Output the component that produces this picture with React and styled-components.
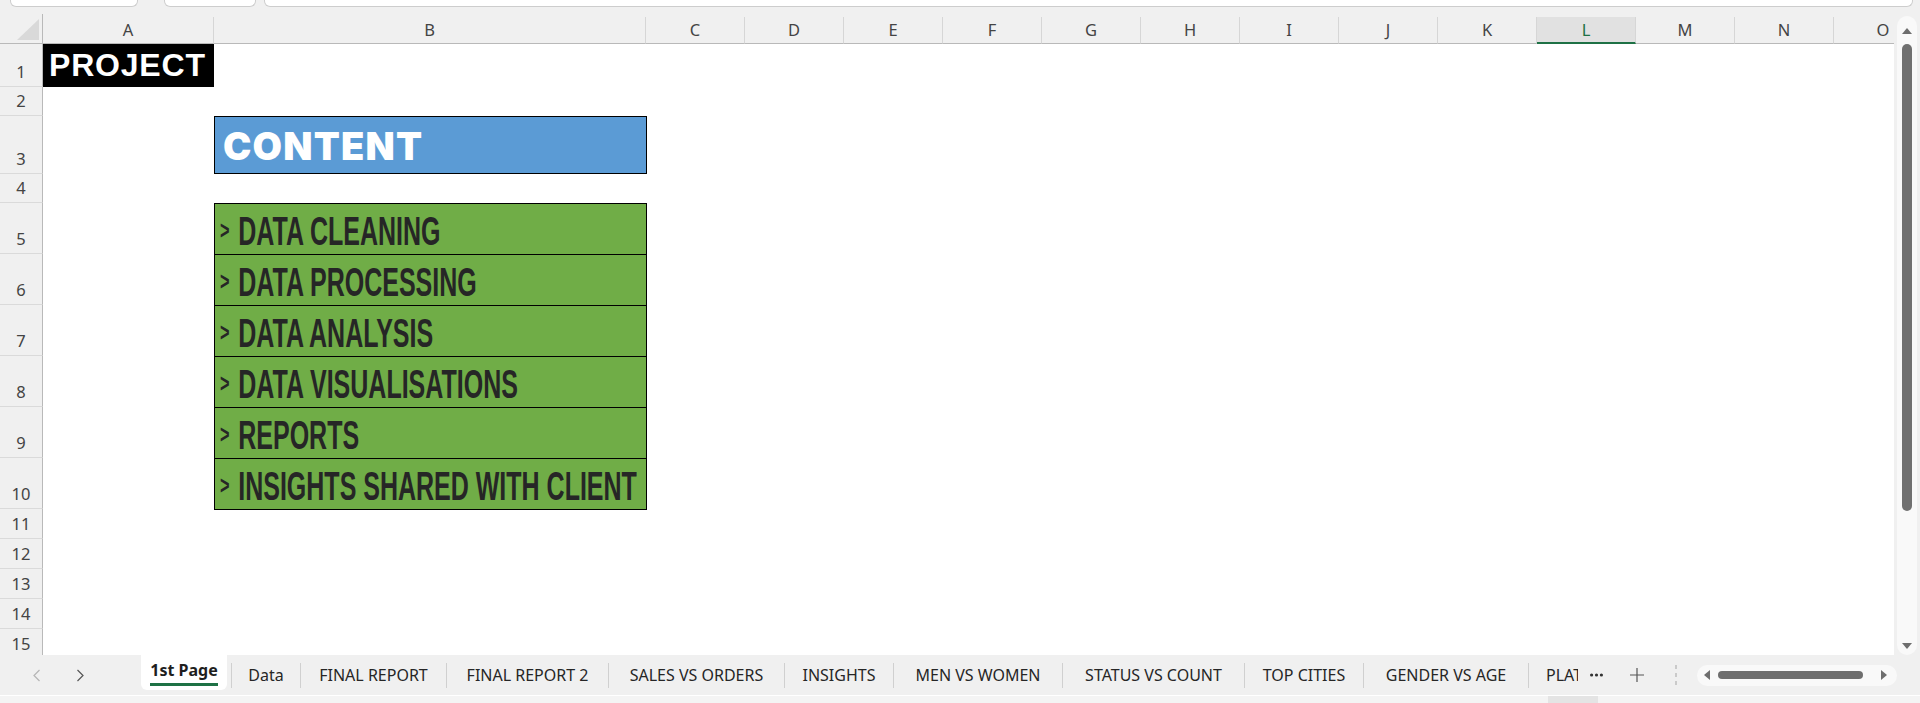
import React from 'react';
import styled, { createGlobalStyle } from "styled-components";

const GlobalStyle = createGlobalStyle`
    html, body {
        margin: 0;
        padding: 0;
        background: #f0f0f0;
        overflow: hidden;
    }
`;

const ui = `"Noto Sans", "Open Sans", "DejaVu Sans", sans-serif`;
const gridCols = `43px 171px 432px repeat(13, 99px)`;
const rowHeights = [43, 29, 58, 29, 51, 51, 51, 51, 51, 51, 30, 30, 30, 30, 30];
const columns = ['A', 'B', 'C', 'D', 'E', 'F', 'G', 'H', 'I', 'J', 'K', 'L', 'M', 'N', 'O'];

const Window = styled.div`
    width: 1920px;
    height: 703px;
    display: flex;
    flex-direction: column;
    background: #f0f0f0;
    overflow: hidden;
    font-family: ${ui};
`;

const TopStrip = styled.div`
    height: 14px;
    flex: none;
    display: flex;
    align-items: flex-start;
    padding-left: 10px;
`;

const InputStub = styled.div`
    width: ${p => p.$w}px;
    margin-right: ${p => p.$gap || 0}px;
    height: 6px;
    background: #fff;
    border: 1px solid #cdcdcd;
    border-top: none;
    border-radius: 0 0 6px 6px;
`;

const Main = styled.div`
    flex: 1;
    display: flex;
    min-height: 0;
`;

const Sheet = styled.div`
    width: 1894px;
    flex: none;
    display: flex;
    flex-direction: column;
    background: #fff;
    overflow: hidden;
`;

const HeaderRow = styled.div`
    height: 30px;
    flex: none;
    display: grid;
    grid-template-columns: ${gridCols};
    background: #f0f0f0;
`;

const Corner = styled.div`
    display: flex;
    align-items: flex-end;
    justify-content: flex-end;
    padding: 0 3px 3px 0;
    border-right: 1px solid #b9b9b9;
    border-bottom: 1px solid #b9b9b9;
`;

const ColHead = styled.div`
    display: flex;
    align-items: flex-end;
    justify-content: center;
    padding-bottom: ${p => p.$selected ? 4 : 5}px;
    margin-top: 3px;
    font-size: 16.5px;
    line-height: 1;
    color: ${p => p.$selected ? '#1e7145' : '#444'};
    background: ${p => p.$selected ? '#e1e1e1' : 'transparent'};
    border-right: 1px solid #d6d6d6;
    border-bottom: ${p => p.$selected ? '2px solid #1e7145' : '1px solid #b9b9b9'};
`;

const Body = styled.div`
    flex: 1;
    display: grid;
    grid-template-columns: ${gridCols};
    grid-template-rows: ${rowHeights.map(h => h + 'px').join(' ')};
    overflow: hidden;
`;

const RowHead = styled.div`
    grid-column: 1;
    grid-row: ${p => p.$row};
    display: flex;
    align-items: flex-end;
    justify-content: center;
    padding-bottom: 6px;
    box-sizing: border-box;
    background: #f0f0f0;
    border-right: 1px solid #b9b9b9;
    border-bottom: 1px solid #dadada;
    font-size: 16.5px;
    line-height: 1;
    color: #444;
`;

const ProjectCell = styled.div`
    grid-column: 2;
    grid-row: 1;
    display: flex;
    align-items: center;
    padding-left: 6px;
    background: #000;
    color: #fff;
    font-family: "Liberation Sans", Arial, sans-serif;
    font-weight: bold;
    font-size: 32px;
    letter-spacing: 0.8px;
`;

const ContentCell = styled.div`
    grid-column: 3;
    grid-row: 3;
    margin-right: -1px;
    display: flex;
    align-items: center;
    padding: 2px 0 0 8px;
    background: #5b9bd5;
    border: 1px solid #000;
    color: #fff;
    font-family: Inter, "Liberation Sans", sans-serif;
    font-weight: 900;
    font-size: 38px;
    letter-spacing: 1.2px;
`;

const ItemCell = styled.div`
    grid-column: 3;
    grid-row: ${p => p.$row};
    margin-right: -1px;
    margin-bottom: ${p => p.$last ? -1 : 0}px;
    display: flex;
    align-items: center;
    padding: 4px 0 0 5px;
    background: #70ad47;
    border: 1px solid #000;
    border-bottom: ${p => p.$last ? '1px solid #000' : 'none'};
    overflow: hidden;
`;

const ItemText = styled.span`
    display: inline-block;
    transform: scaleX(0.625);
    transform-origin: left center;
    white-space: nowrap;
    font-family: "Liberation Sans", Arial, sans-serif;
    font-weight: bold;
    font-size: 40px;
    line-height: 1;
    color: #262626;
`;

const Chevron = styled.span`
    display: inline-block;
    font-size: 26px;
    vertical-align: 6px;
    margin-right: 14px;
`;

const VScroll = styled.div`
    width: 26px;
    flex: none;
    display: flex;
    padding: 2px 3px 0 3px;
    box-sizing: border-box;
`;

const VTrack = styled.div`
    flex: 1;
    display: flex;
    flex-direction: column;
    align-items: center;
    border-radius: 10px;
    background: #f9f9f9;
`;

const VThumb = styled.div`
    width: 10px;
    height: 467px;
    margin-top: 10px;
    border-radius: 5px;
    background: #707070;
`;

const Spacer = styled.div`
    flex: 1;
`;

const TabBar = styled.div`
    height: 40px;
    flex: none;
    display: flex;
    align-items: center;
    background: #f0f0f0;
    font-size: 16px;
    color: #262626;
`;

const NavArea = styled.div`
    width: 141px;
    flex: none;
    display: flex;
    align-items: center;
    padding-left: 33px;
    gap: 35px;
    box-sizing: border-box;
`;

const ActiveTab = styled.div`
    width: 86px;
    height: 35px;
    align-self: flex-start;
    margin-right: 4px;
    display: flex;
    align-items: center;
    justify-content: center;
    background: #fff;
    border-radius: 0 0 6px 6px;
    box-sizing: border-box;
    padding-top: 2px;

    span {
        font-weight: bold;
        color: #1e1e1e;
        border-bottom: 3px solid #1e7145;
        line-height: 1.2;
        padding-bottom: 2px;
    }
`;

const Sep = styled.div`
    width: 1px;
    height: 25px;
    flex: none;
    background: #d0d0d0;
`;

const Tab = styled.div`
    width: ${p => p.$w}px;
    flex: none;
    display: flex;
    justify-content: ${p => p.$cut ? 'flex-start' : 'center'};
    padding-left: ${p => p.$cut ? 17 : 0}px;
    box-sizing: border-box;
    white-space: nowrap;
    overflow: hidden;
`;

const IconSlot = styled.div`
    width: ${p => p.$w}px;
    flex: none;
    display: flex;
    align-items: center;
    justify-content: center;
`;

const HScroll = styled.div`
    width: 200px;
    height: 21px;
    margin-left: 4px;
    flex: none;
    display: flex;
    align-items: center;
    padding: 0 10px 0 7px;
    box-sizing: border-box;
    border-radius: 11px;
    background: #f9f9f9;
`;

const HThumb = styled.div`
    width: 145px;
    height: 8px;
    margin-left: 8px;
    border-radius: 4px;
    background: #6e6e6e;
`;

const StatusStrip = styled.div`
    height: 7px;
    flex: none;
    display: flex;
    background: #f4f4f4;
    border-top: 1px solid #fff;
    padding-left: 1548px;
`;

const ViewButton = styled.div`
    width: 50px;
    background: #e4e4e4;
`;

const Tri = ({ dir, color = '#6e6e6e' }) => {
    const pts = {
        up: '0,6 5,0 10,6',
        down: '0,0 10,0 5,6',
        left: '6,0 6,10 0,5',
        right: '0,0 6,5 0,10',
    }[dir];
    const vertical = dir === 'up' || dir === 'down';
    return (
        <svg width={vertical ? 10 : 6} height={vertical ? 6 : 10}>
            <polygon points={pts} fill={color} />
        </svg>
    );
};

const Chev = ({ left, color }) => (
    <svg width="8" height="13" viewBox="0 0 8 13">
        <polyline points={left ? '6.5,1 1,6.5 6.5,12' : '1.5,1 7,6.5 1.5,12'} fill="none" stroke={color} strokeWidth="1.2" />
    </svg>
);

const items = [
    'DATA CLEANING',
    'DATA PROCESSING',
    'DATA ANALYSIS',
    'DATA VISUALISATIONS',
    'REPORTS',
    'INSIGHTS SHARED WITH CLIENT',
];

const tabs = [
    ['Data', 68],
    ['FINAL REPORT', 145],
    ['FINAL REPORT 2', 161],
    ['SALES VS ORDERS', 175],
    ['INSIGHTS', 108],
    ['MEN VS WOMEN', 168],
    ['STATUS VS COUNT', 181],
    ['TOP CITIES', 118],
    ['GENDER VS AGE', 164],
];

const App = () => {
    return (
        <Window>
            <GlobalStyle />
            <TopStrip>
                <InputStub $w={126} $gap={26} />
                <InputStub $w={90} $gap={8} />
                <InputStub $w={1647} />
            </TopStrip>
            <Main>
                <Sheet>
                    <HeaderRow>
                        <Corner>
                            <svg width="22" height="21">
                                <polygon points="22,0 22,21 0,21" fill="#d9d9d9" />
                            </svg>
                        </Corner>
                        {columns.map(c => (
                            <ColHead key={c} $selected={c === 'L'}>{c}</ColHead>
                        ))}
                    </HeaderRow>
                    <Body>
                        {rowHeights.map((h, i) => (
                            <RowHead key={i} $row={i + 1}>{i + 1}</RowHead>
                        ))}
                        <ProjectCell>PROJECT</ProjectCell>
                        <ContentCell>CONTENT</ContentCell>
                        {items.map((item, i) => (
                            <ItemCell key={item} $row={i + 5} $last={i === items.length - 1}>
                                <ItemText><Chevron>&gt;</Chevron>{item}</ItemText>
                            </ItemCell>
                        ))}
                    </Body>
                </Sheet>
                <VScroll>
                    <VTrack>
                        <div style={{ marginTop: 12, lineHeight: 0 }}><Tri dir="up" /></div>
                        <VThumb />
                        <Spacer />
                        <div style={{ marginBottom: 6, lineHeight: 0 }}><Tri dir="down" /></div>
                    </VTrack>
                </VScroll>
            </Main>
            <TabBar>
                <NavArea>
                    <Chev left color="#b5b5b5" />
                    <Chev color="#555" />
                </NavArea>
                <ActiveTab><span>1st Page</span></ActiveTab>
                {tabs.map(([name, w]) => (
                    <React.Fragment key={name}>
                        <Sep />
                        <Tab $w={w}>{name}</Tab>
                    </React.Fragment>
                ))}
                <Sep />
                <Tab $w={49} $cut>PLATFORM</Tab>
                <IconSlot $w={37}>
                    <svg width="13" height="4">
                        <circle cx="1.6" cy="2" r="1.6" fill="#333" />
                        <circle cx="6.5" cy="2" r="1.6" fill="#333" />
                        <circle cx="11.4" cy="2" r="1.6" fill="#333" />
                    </svg>
                </IconSlot>
                <IconSlot $w={44}>
                    <svg width="14" height="14">
                        <path d="M7 0 V14 M0 7 H14" stroke="#555" strokeWidth="1.2" />
                    </svg>
                </IconSlot>
                <IconSlot $w={34}>
                    <svg width="2" height="20">
                        <rect x="0" y="0" width="2" height="4" fill="#cacaca" />
                        <rect x="0" y="8" width="2" height="4" fill="#cacaca" />
                        <rect x="0" y="16" width="2" height="4" fill="#cacaca" />
                    </svg>
                </IconSlot>
                <HScroll>
                    <Tri dir="left" />
                    <HThumb />
                    <Spacer />
                    <Tri dir="right" />
                </HScroll>
            </TabBar>
            <StatusStrip>
                <ViewButton />
            </StatusStrip>
        </Window>
    );
};

export default App;
